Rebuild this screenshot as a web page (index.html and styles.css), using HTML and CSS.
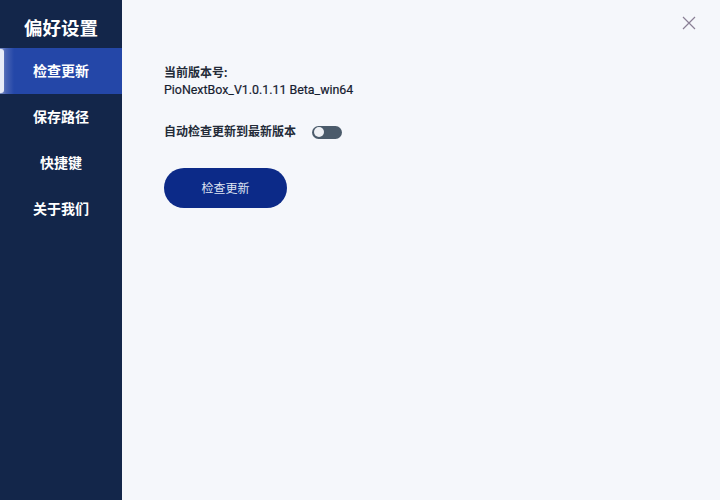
FILE: index.html
```html
<!DOCTYPE html>
<html lang="zh-CN">
<head>
<meta charset="utf-8">
<link rel="stylesheet" href="styles.css">
</head>
<body>
<div class="app">
  <aside class="sidebar">
    <div class="title">偏好设置</div>
    <nav class="nav">
      <div class="nav-item active">检查更新</div>
      <div class="nav-item">保存路径</div>
      <div class="nav-item">快捷键</div>
      <div class="nav-item">关于我们</div>
    </nav>
  </aside>
  <main class="main">
    <div class="close">
      <svg width="14" height="14" viewBox="0 0 14 14"><path d="M1 1L13 13M13 1L1 13" stroke="#8a7f95" stroke-width="1.2" fill="none"/></svg>
    </div>
    <div class="content">
      <div class="label">当前版本号:</div>
      <div class="version">PioNextBox_V1.0.1.11 Beta_win64</div>
      <div class="row">
        <span class="label">自动检查更新到最新版本</span>
        <span class="toggle"><span class="knob"></span></span>
      </div>
      <button class="btn">检查更新</button>
    </div>
  </main>
</div>
</body>
</html>
```
FILE: styles.css
```css
* { box-sizing: border-box; }
html, body { margin: 0; padding: 0; }
body {
  font-family: "Noto Sans", "Noto Sans CJK SC", sans-serif;
  width: 720px;
  height: 500px;
  overflow: hidden;
}
.app {
  display: flex;
  height: 500px;
}
.sidebar {
  width: 122px;
  background: #13264a;
  color: #fff;
  display: flex;
  flex-direction: column;
}
.title {
  height: 48px;
  display: flex;
  align-items: center;
  justify-content: center;
  font-size: 18.5px;
  font-weight: 700;
  padding-top: 5px;
}
.nav { display: flex; flex-direction: column; }
.nav-item {
  height: 46px;
  display: flex;
  align-items: center;
  justify-content: center;
  font-size: 14px;
  font-weight: 700;
  position: relative;
  padding-bottom: 2px;
}
.nav-item.active {
  background: linear-gradient(90deg, #8293c4 0px, #4863b4 6px, #2447a8 14px, #2447a8 100%);
}
.nav-item.active::before {
  content: "";
  position: absolute;
  left: 0;
  top: 1px;
  bottom: 1px;
  width: 4px;
  background: #e8ecf8;
  border-radius: 0 3px 3px 0;
}
.main {
  flex: 1;
  background: #f5f7fb;
  position: relative;
}
.close {
  position: absolute;
  right: 24px;
  top: 16px;
  width: 14px;
  height: 14px;
  display: flex;
}
.content {
  padding: 65px 0 0 42px;
  display: flex;
  flex-direction: column;
  align-items: flex-start;
  color: #232b38;
}
.label {
  font-size: 12px;
  font-weight: 700;
  line-height: 16px;
}
.version {
  font-family: Roboto, "Noto Sans CJK SC", sans-serif;
  font-size: 12.4px;
  font-weight: 400;
  line-height: 17px;
  margin-top: 0;
  color: #16202f;
  -webkit-text-stroke: 0.2px #16202f;
}
.row {
  display: flex;
  align-items: center;
  gap: 16px;
  margin-top: 26px;
}
.toggle {
  width: 30px;
  height: 13px;
  border-radius: 7px;
  background: #4b5b6b;
  display: flex;
  align-items: center;
  padding-left: 2px;
}
.knob {
  width: 10px;
  height: 10px;
  border-radius: 50%;
  background: #eef0f4;
}
.btn {
  margin-top: 28px;
  width: 123px;
  height: 40px;
  border: none;
  border-radius: 20px;
  background: #0c2a88;
  color: #dfe4f2;
  font-family: "Noto Sans", "Noto Sans CJK SC", sans-serif;
  font-size: 12px;
  padding: 0;
}
```
